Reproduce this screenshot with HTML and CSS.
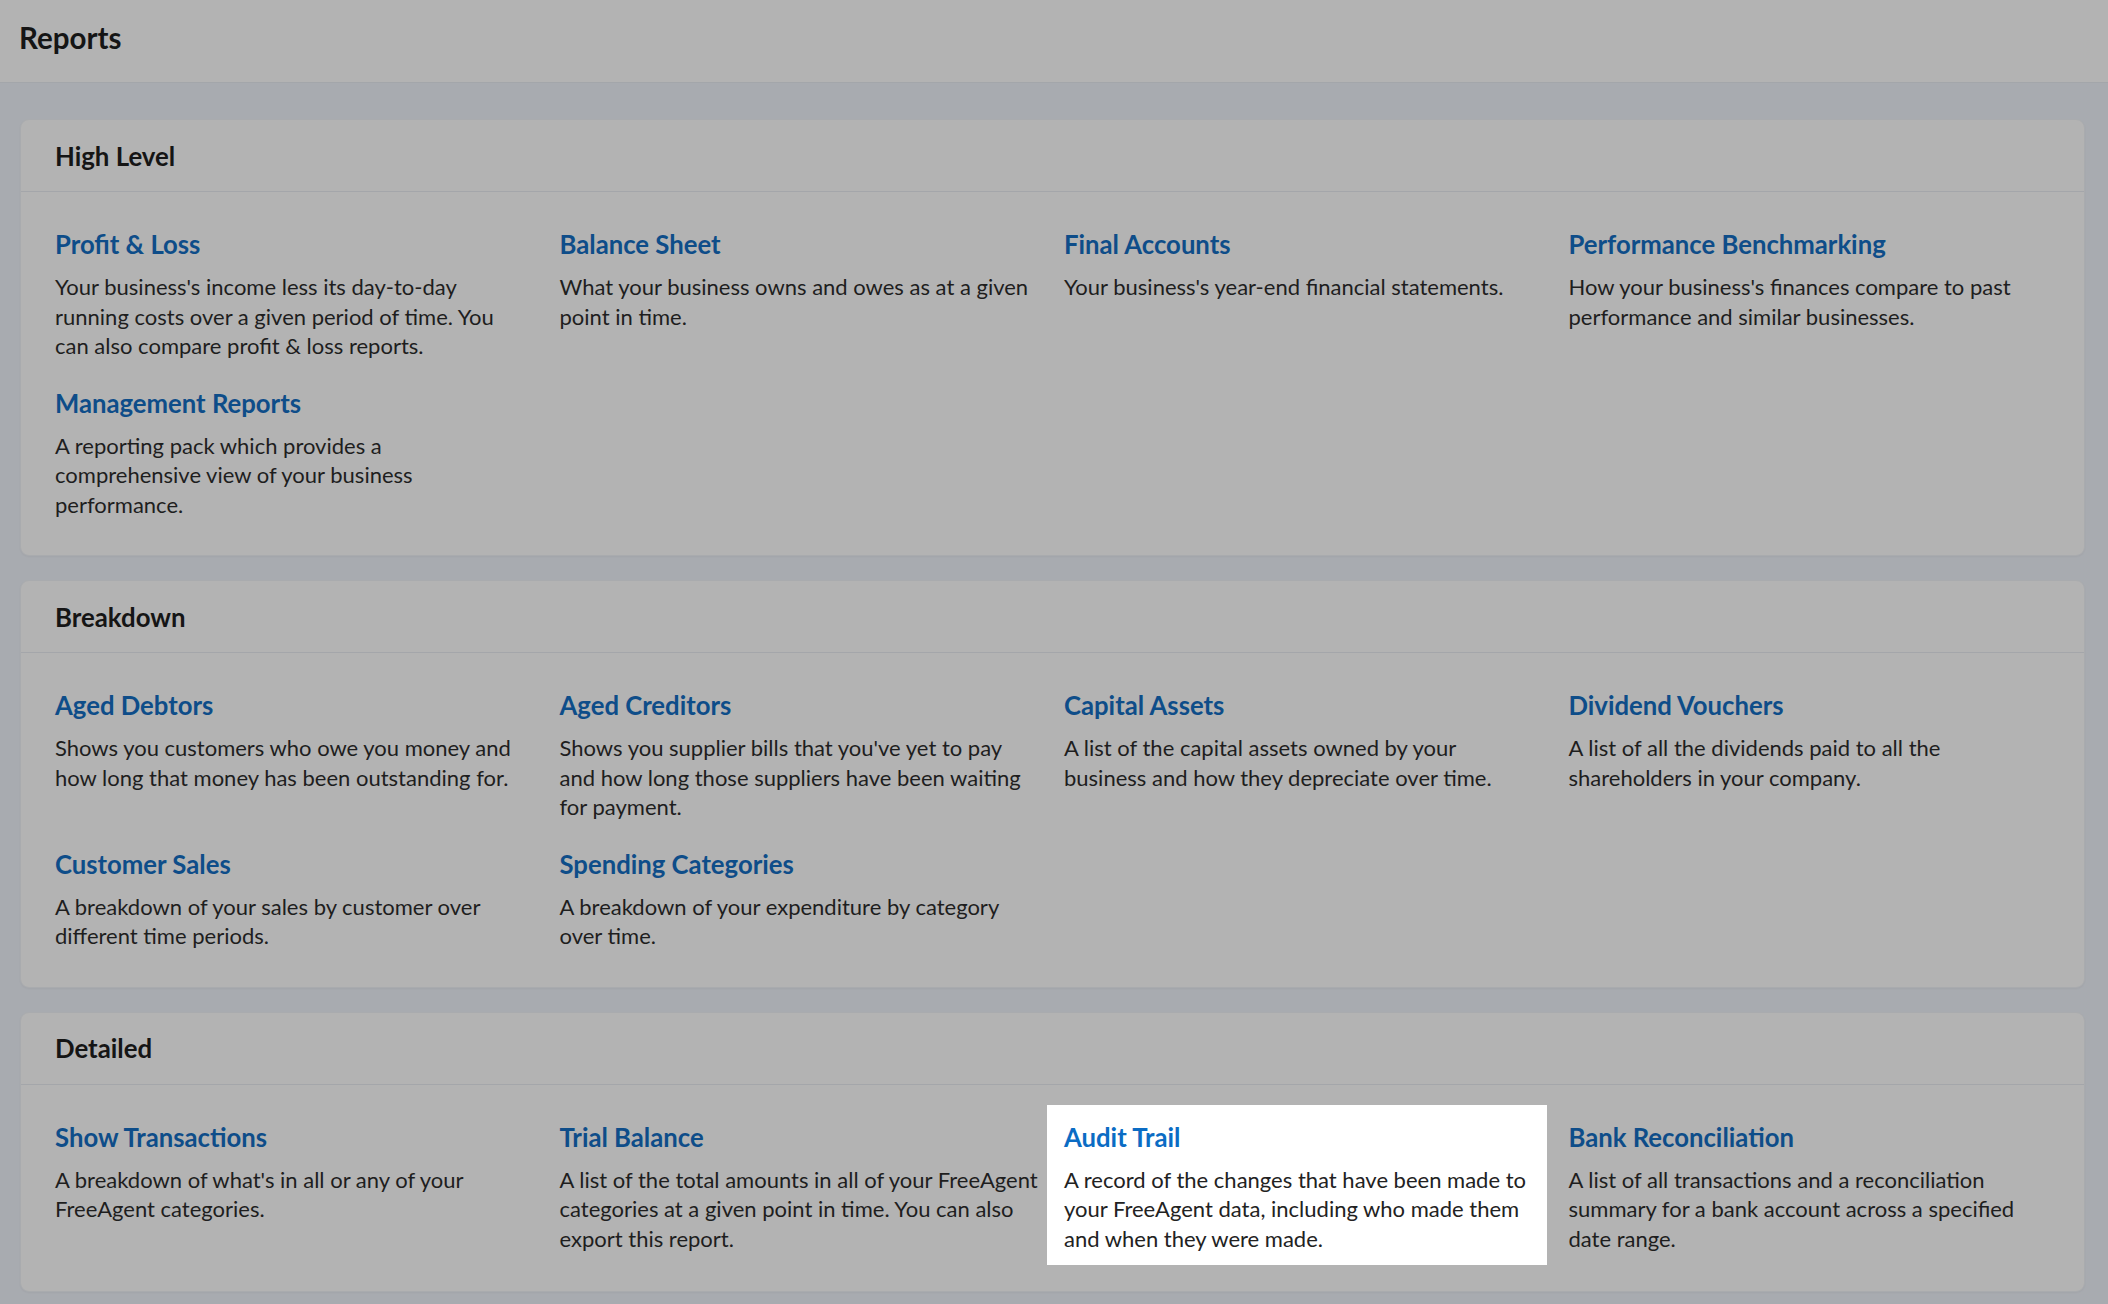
FILE: index.html
```html
<!DOCTYPE html>
<html lang="en">
<head>
  <meta charset="UTF-8">
  <title>Reports</title>
  <link rel="stylesheet" href="styles.css">
</head>
<body>
  <header class="topbar">
    <h1>Reports</h1>
  </header>

  <main class="page">
    <section class="card">
      <h2 class="card-head">High Level</h2>
      <div class="report-grid">
        <div class="report">
          <a href="#">Profit &amp; Loss</a>
          <p>Your business's income less its day-to-day running costs over a given period of time. You can also compare profit &amp; loss reports.</p>
        </div>
        <div class="report">
          <a href="#">Balance Sheet</a>
          <p>What your business owns and owes as at a given point in time.</p>
        </div>
        <div class="report">
          <a href="#">Final Accounts</a>
          <p>Your business's year-end financial statements.</p>
        </div>
        <div class="report">
          <a href="#">Performance Benchmarking</a>
          <p>How your business's finances compare to past performance and similar businesses.</p>
        </div>
        <div class="report">
          <a href="#">Management Reports</a>
          <p>A reporting pack which provides a comprehensive view of your business performance.</p>
        </div>
      </div>
    </section>

    <section class="card">
      <h2 class="card-head">Breakdown</h2>
      <div class="report-grid">
        <div class="report">
          <a href="#">Aged Debtors</a>
          <p>Shows you customers who owe you money and how long that money has been outstanding for.</p>
        </div>
        <div class="report">
          <a href="#">Aged Creditors</a>
          <p>Shows you supplier bills that you've yet to pay and how long those suppliers have been waiting for payment.</p>
        </div>
        <div class="report">
          <a href="#">Capital Assets</a>
          <p>A list of the capital assets owned by your business and how they depreciate over time.</p>
        </div>
        <div class="report">
          <a href="#">Dividend Vouchers</a>
          <p>A list of all the dividends paid to all the shareholders in your company.</p>
        </div>
        <div class="report">
          <a href="#">Customer Sales</a>
          <p>A breakdown of your sales by customer over different time periods.</p>
        </div>
        <div class="report">
          <a href="#">Spending Categories</a>
          <p>A breakdown of your expenditure by category over time.</p>
        </div>
      </div>
    </section>

    <section class="card">
      <h2 class="card-head">Detailed</h2>
      <div class="report-grid">
        <div class="report">
          <a href="#">Show Transactions</a>
          <p>A breakdown of what's in all or any of your FreeAgent categories.</p>
        </div>
        <div class="report report-wide">
          <a href="#">Trial Balance</a>
          <p>A list of the total amounts in all of your FreeAgent categories at a given point in time. You can also export this report.</p>
        </div>
        <div class="report spotlight">
          <a href="#">Audit Trail</a>
          <p>A record of the changes that have been made to your FreeAgent data, including who made them and when they were made.</p>
        </div>
        <div class="report">
          <a href="#">Bank Reconciliation</a>
          <p>A list of all transactions and a reconciliation summary for a bank account across a specified date range.</p>
        </div>
      </div>
    </section>
  </main>
</body>
</html>
```

FILE: styles.css
```css
body {
  margin: 0;
  background: #a8abb0;
  font-family: Lato, "Open Sans", Arial, sans-serif;
  color: #1e1e1e;
}
.topbar {
  height: 75px;
  padding-bottom: 7px;
  display: flex;
  align-items: center;
  padding-left: 19px;
  background: #b3b3b3;
  border-bottom: 1px solid #a3a6aa;
}
.topbar h1 {
  margin: 0;
  font-size: 29.5px;
  font-weight: 700;
  color: #151515;
}
.page {
  padding: 36px 23px 16px 20px;
}
.card {
  background: #b3b3b3;
  border: 1px solid #a9abae;
  border-radius: 9px;
  margin-bottom: 24px;
  box-shadow: 0 1px 2px rgba(0, 0, 0, 0.04);
}
.card-head {
  margin: 0;
  height: 71px;
  display: flex;
  align-items: center;
  padding-left: 34px;
  font-size: 25.8px;
  font-weight: 700;
  color: #151515;
  border-bottom: 1px solid #a4a6aa;
}
.report-grid {
  display: grid;
  grid-template-columns: repeat(4, 500px);
  column-gap: 4.5px;
  padding: 20px 34px 26px 17px;
}
.report {
  padding: 17px 14px 10px 17px;
}
.report a {
  display: block;
  font-size: 25.7px;
  line-height: 30px;
  font-weight: 700;
  color: #0e4d89;
  text-decoration: none;
}
.report p {
  margin: 13px 0 0;
  font-size: 22px;
  line-height: 29.5px;
}
.report-wide p {
  margin-right: -12px;
}
.spotlight {
  background: #fff;
  padding-bottom: 12px;
}
.spotlight a {
  color: #0b6cc4;
}
.spotlight p {
  color: #222;
}
```
